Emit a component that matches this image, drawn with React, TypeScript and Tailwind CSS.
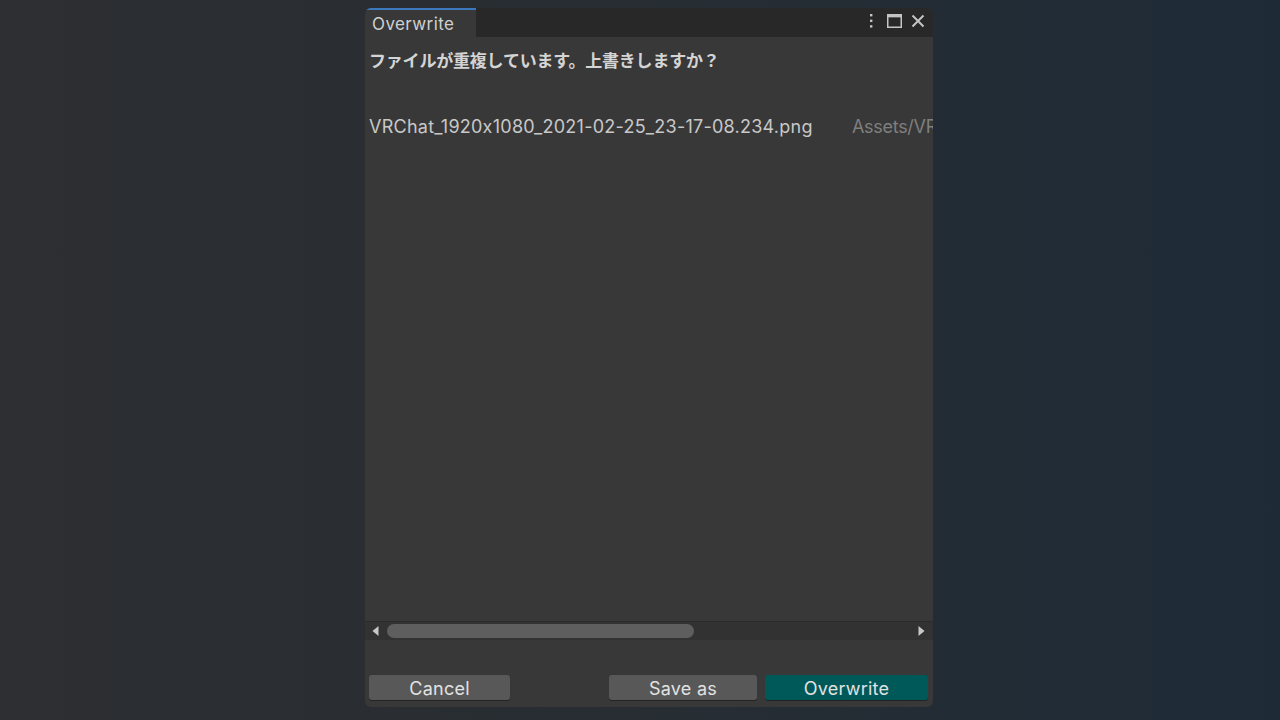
import React from "react";

const font = { fontFamily: "Inter, 'Noto Sans CJK JP', sans-serif", fontFeatureSettings: "'calt' 0" };

function Kebab() {
  return (
    <svg width="4" height="14" viewBox="0 0 4 14" className="text-[#c4c4c4]">
      <rect x="1" y="0" width="2.4" height="2.4" fill="currentColor" />
      <rect x="1" y="5.6" width="2.4" height="2.4" fill="currentColor" />
      <rect x="1" y="11.2" width="2.4" height="2.4" fill="currentColor" />
    </svg>
  );
}

function Maximize() {
  return (
    <svg width="15" height="14" viewBox="0 0 15 14" className="text-[#c4c4c4]">
      <rect x="0.75" y="0.75" width="13.5" height="12.5" fill="none" stroke="currentColor" strokeWidth="1.5" />
      <rect x="0.75" y="0.75" width="13.5" height="2.6" fill="currentColor" />
    </svg>
  );
}

function Close() {
  return (
    <svg width="14" height="14" viewBox="0 0 14 14" className="text-[#c4c4c4]">
      <path d="M1.5 1.5 L12.5 12.5 M12.5 1.5 L1.5 12.5" stroke="currentColor" strokeWidth="2" />
    </svg>
  );
}

const App = () => {
  return (
    <div
      className="w-[1280px] h-[720px] overflow-hidden bg-gradient-to-r from-[#2d2f32] via-[#272d33] to-[#1e2b37] pt-[8px] pl-[365px]"
      style={font}
    >
      <div className="w-[568px] h-[699px] rounded-[6px] overflow-hidden bg-[#383838] flex flex-col">
        {/* TAB BAR */}
        <div className="h-[29px] bg-[#282828] flex items-stretch shrink-0">
          <div className="w-[111px] bg-[#383838] border-t-2 border-[#3b78bd] pl-[7px] pt-[4px] text-[17px] leading-[21px] tracking-[0.4px] text-[#d0d0d0]">
            Overwrite
          </div>
          <div className="flex-1 flex items-center justify-end gap-[14px] pr-[8px] pb-[3px]">
            <Kebab />
            <div className="flex items-center gap-[9px]">
              <Maximize />
              <Close />
            </div>
          </div>
        </div>

        {/* TITLE */}
        <div className="pl-[4px] mt-[14px] text-[17px] leading-[20px] font-bold text-[#d4d4d4] tracking-[-0.2px]">
          ファイルが重複しています。上書きしますか？
        </div>

        {/* FILE LIST */}
        <div className="flex-1 overflow-hidden">
          <div className="mt-[45px] pl-[4px] flex whitespace-nowrap text-[18px] leading-[21px] tracking-[0.25px]">
            <span className="w-[483px] shrink-0 text-[#c8c8c8]">VRChat_1920x1080_2021-02-25_23-17-08.234.png</span>
            <span className="text-[#7f7f7f] tracking-[-0.3px]">Assets/VR</span>
          </div>
        </div>

        {/* SCROLLBAR */}
        <div className="h-[19px] shrink-0 bg-[#323232] border-t border-[#2b2b2b] flex items-center pl-[7px] pr-[8px]">
          <svg width="7" height="10" viewBox="0 0 7 10">
            <path d="M6.5 0 L0.5 5 L6.5 10 Z" fill="#c8c8c8" />
          </svg>
          <div className="ml-[8px] w-[307px] h-[14px] rounded-full bg-[#5e5e5e]" />
          <div className="flex-1" />
          <svg width="7" height="10" viewBox="0 0 7 10">
            <path d="M0.5 0 L6.5 5 L0.5 10 Z" fill="#c8c8c8" />
          </svg>
        </div>

        {/* BUTTONS */}
        <div className="mt-[35px] mb-[7px] px-[4px] flex items-center h-[25px] shrink-0 text-[18px] tracking-[0.25px] text-[#e2e2e2]">
          <button className="w-[141px] h-[25px] pt-[2px] rounded-[3px] bg-[#585858] shadow-[0_1px_0_#232323] leading-[23px]">
            Cancel
          </button>
          <div className="flex-1" />
          <button className="w-[148px] h-[25px] pt-[2px] rounded-[3px] bg-[#585858] shadow-[0_1px_0_#232323] leading-[23px]">
            Save as
          </button>
          <button className="ml-[8px] mr-[1px] w-[163px] h-[25px] pt-[2px] rounded-[3px] bg-[#005959] shadow-[0_1px_0_#232323] leading-[23px]">
            Overwrite
          </button>
        </div>
      </div>
    </div>
  );
};

export default App;
